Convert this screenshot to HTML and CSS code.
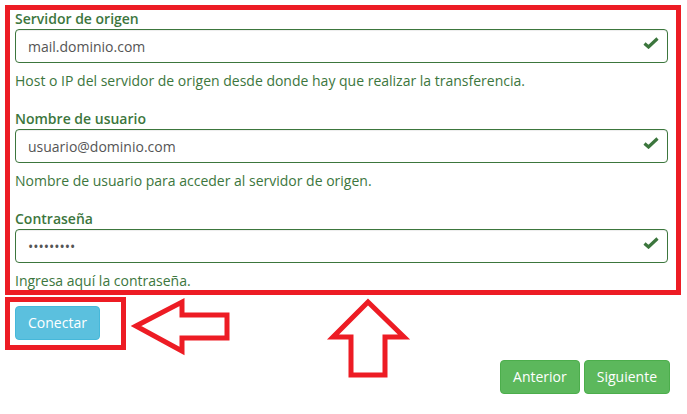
FILE: index.html
```html
<!DOCTYPE html>
<html lang="es">
  <head>
    <meta charset="UTF-8" />
    <meta name="viewport" content="width=device-width, initial-scale=1.0" />
    <title>Migración de correo</title>
    <link rel="stylesheet" href="styles.css">
  </head>
  <body>
    <div class="page">
      <div class="form-box">
        <div class="form-group">
          <label class="field-label" for="host">Servidor de origen</label>
          <div class="input-wrap">
            <input id="host" class="form-control" type="text" value="mail.dominio.com" />
            <svg class="feedback" viewBox="0 0 16 12"><path d="M1.5 6.5 L5.5 10 L14.5 1.5" /></svg>
          </div>
          <p class="help">Host o IP del servidor de origen desde donde hay que realizar la transferencia.</p>
        </div>

        <div class="form-group">
          <label class="field-label" for="user">Nombre de usuario</label>
          <div class="input-wrap">
            <input id="user" class="form-control" type="text" value="usuario@dominio.com" />
            <svg class="feedback" viewBox="0 0 16 12"><path d="M1.5 6.5 L5.5 10 L14.5 1.5" /></svg>
          </div>
          <p class="help">Nombre de usuario para acceder al servidor de origen.</p>
        </div>

        <div class="form-group last">
          <label class="field-label" for="pass">Contraseña</label>
          <div class="input-wrap">
            <input id="pass" class="form-control" type="password" value="123456789" />
            <svg class="feedback" viewBox="0 0 16 12"><path d="M1.5 6.5 L5.5 10 L14.5 1.5" /></svg>
          </div>
          <p class="help">Ingresa aquí la contraseña.</p>
        </div>
      </div>

      <div class="connect-box">
        <button class="btn btn-info">Conectar</button>
      </div>

      <div class="wizard-nav">
        <button class="btn btn-success">Anterior</button>
        <button class="btn btn-success">Siguiente</button>
      </div>

      <!-- flechas de anotación -->
      <svg class="marks" viewBox="0 0 687 414">
        <polygon points="136,326 182,302 182,315 227,315 227,338 182,338 182,351" />
        <polygon points="368,302 404,337 385,337 385,375 351,375 351,337 333,337" />
      </svg>
    </div>
  </body>
</html>
```

FILE: styles.css
```css
* {
  box-sizing: border-box;
}

body {
  margin: 0;
  font-family: 'Open Sans', sans-serif;
  font-size: 14px;
  color: #333;
  background: #fff;
}

.page {
  position: relative;
  width: 687px;
  height: 414px;
  overflow: hidden;
}

.form-box {
  margin: 5px 0 0 5px;
  width: 676px;
  border: 5px solid #ed1c24;
  padding: 0 8px 0 5px;
}

.form-group {
  margin-bottom: 19px;
}

.form-group.last {
  margin-bottom: -1px;
}

.field-label {
  display: block;
  font-weight: 600;
  color: #3c763d;
  line-height: 17px;
  margin-bottom: 2px;
}

.input-wrap {
  position: relative;
}

.form-control {
  display: block;
  width: 100%;
  height: 34px;
  padding: 6px 12px;
  font-family: 'Open Sans', sans-serif;
  font-size: 14px;
  line-height: 20px;
  color: #555;
  background: #fff;
  border: 1px solid #3c763d;
  border-radius: 4px;
  box-shadow: inset 0 1px 1px rgba(0, 0, 0, 0.075);
  outline: none;
}

.feedback {
  position: absolute;
  top: 8px;
  right: 9px;
  width: 16px;
  height: 12px;
  fill: none;
  stroke: #3c763d;
  stroke-width: 3.2;
}

.help {
  margin: 8px 0 0;
  line-height: 20px;
  color: #3c763d;
}

.connect-box {
  margin: 2px 0 0 5px;
  width: 121px;
  height: 53px;
  border: 5px solid #ed1c24;
  padding: 4px 0 0 5px;
}

.btn {
  display: inline-block;
  padding: 6px 12px;
  font-family: 'Open Sans', sans-serif;
  font-size: 14px;
  line-height: 20px;
  color: #fff;
  border: 1px solid transparent;
  border-radius: 4px;
  cursor: pointer;
}

.btn-info {
  background-color: #5bc0de;
  border-color: #46b8da;
}

.btn-success {
  background-color: #5cb85c;
  border-color: #4cae4c;
}

.wizard-nav {
  margin-top: 10px;
  display: flex;
  justify-content: flex-end;
  gap: 4px;
  padding-right: 17px;
}

.marks {
  position: absolute;
  top: 0;
  left: 0;
  width: 687px;
  height: 414px;
  pointer-events: none;
  fill: none;
  stroke: #ed1c24;
  stroke-width: 5;
  stroke-linejoin: miter;
}
```
